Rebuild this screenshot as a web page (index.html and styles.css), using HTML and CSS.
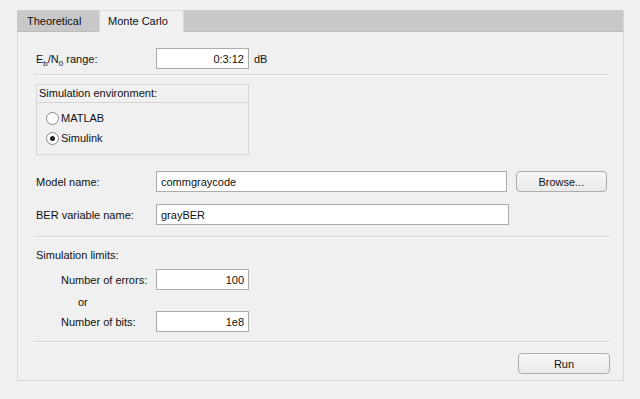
FILE: index.html
```html
<!DOCTYPE html>
<html lang="en">
<head>
    <meta charset="UTF-8">
    <title>BER Analysis - Monte Carlo</title>
    <link rel="stylesheet" href="styles.css">
</head>
<body>
    <div class="tabgroup">
        <!-- Tab strip -->
        <div class="tabs">
            <div class="tab">Theoretical</div>
            <div class="tab tab-active">Monte Carlo</div>
            <div class="tab-fill"></div>
        </div>

        <!-- Monte Carlo panel -->
        <div class="panel">
            <div class="row row-range">
                <span class="label">E<sub>b</sub>/N<sub>0</sub> range:</span>
                <input class="field field-short" type="text" value="0:3:12">
                <span class="unit">dB</span>
            </div>

            <hr class="sep sep-first">

            <fieldset class="groupbox">
                <div class="groupbox-title">Simulation environment:</div>
                <label class="radio"><span class="radio-dot"></span>MATLAB</label>
                <label class="radio"><span class="radio-dot checked"></span>Simulink</label>
            </fieldset>

            <div class="row row-model">
                <span class="label">Model name:</span>
                <input class="field field-long left" type="text" value="commgraycode">
                <button class="btn">Browse...</button>
            </div>

            <div class="row row-ber">
                <span class="label">BER variable name:</span>
                <input class="field field-long left" type="text" value="grayBER">
            </div>

            <hr class="sep sep-mid">

            <div class="limits-title">Simulation limits:</div>
            <div class="row row-errors">
                <span class="label label-indent">Number of errors:</span>
                <input class="field field-short" type="text" value="100">
            </div>
            <div class="or">or</div>
            <div class="row row-bits">
                <span class="label label-indent">Number of bits:</span>
                <input class="field field-short" type="text" value="1e8">
            </div>

            <hr class="sep sep-last">

            <div class="actions">
                <button class="btn">Run</button>
            </div>
        </div>
    </div>
</body>
</html>
```

FILE: styles.css
```css
body {
    background: #f0f0f0;
    margin: 0;
    padding: 10px 16px 0 17px;
    font-family: "Liberation Sans", Arial, sans-serif;
    font-size: 11px;
    color: #111;
}

.tabgroup {
    width: 607px;
}

.tabs {
    display: flex;
    height: 22px;
}

.tab {
    box-sizing: border-box;
    width: 82px;
    padding-left: 10px;
    line-height: 21px;
    background: #c8c8c8;
    border-top: 1px solid #d0d0d0;
    border-bottom: 1px solid #bcbcbc;
}

.tab-active {
    width: 85px;
    padding-left: 8px;
    background: #f0f0f0;
    border: 1px solid #dadada;
    border-bottom: none;
}

.tab-fill {
    flex: 1;
    background: #c8c8c8;
    border-top: 1px solid #d0d0d0;
    border-right: 1px solid #d8d8d8;
    border-bottom: 1px solid #bcbcbc;
}

.panel {
    box-sizing: border-box;
    height: 349px;
    padding: 16px 16px 0 16px;
    border: 1px solid #dadada;
    border-top: none;
    display: flex;
    flex-direction: column;
}

.row {
    display: flex;
    align-items: center;
    height: 21px;
}

.label {
    width: 120px;
    padding-left: 2px;
    flex-shrink: 0;
}

.label-indent {
    width: 95px;
    padding-left: 27px;
}

sub {
    font-size: 8px;
    vertical-align: -3px;
    line-height: 0;
}

.field {
    box-sizing: border-box;
    height: 21px;
    border: 1px solid #acacac;
    background: #fff;
    font-family: "Liberation Sans", Arial, sans-serif;
    font-size: 11px;
    color: #111;
    text-align: right;
    padding: 0 4px;
    margin: 0;
}

.field-short {
    width: 93px;
}

.field-long {
    width: 353px;
}

.left {
    text-align: left;
}

.unit {
    margin-left: 5px;
}

.sep {
    width: 575px;
    margin: 0;
    border: none;
    border-top: 1px solid #d4d4d4;
    border-bottom: 1px solid #fbfbfb;
}

.sep-first {
    margin-top: 5px;
}

.groupbox {
    box-sizing: border-box;
    width: 213px;
    height: 71px;
    margin: 8px 0 0 2px;
    padding: 0;
    border: 1px solid #d6d6d6;
}

.groupbox-title {
    height: 17px;
    line-height: 17px;
    padding-left: 2px;
    border-bottom: 1px solid #d6d6d6;
    margin-bottom: 5px;
}

.radio {
    display: flex;
    align-items: center;
    height: 20px;
    padding-left: 9px;
}

.radio-dot {
    box-sizing: border-box;
    width: 13px;
    height: 13px;
    margin-right: 2px;
    border: 1px solid #8a8a8a;
    border-radius: 50%;
    background: #fff;
    display: flex;
    align-items: center;
    justify-content: center;
}

.radio-dot.checked::after {
    content: "";
    width: 5px;
    height: 5px;
    border-radius: 50%;
    background: #222;
}

.row-model {
    margin-top: 16px;
}

.row-ber {
    margin-top: 12px;
}

.sep-mid {
    margin-top: 11px;
}

.limits-title {
    margin-top: 10px;
    padding-left: 2px;
    line-height: 14px;
}

.row-errors {
    margin-top: 7px;
}

.or {
    padding-left: 44px;
    line-height: 14px;
    margin-top: 5px;
}

.row-bits {
    margin-top: 2px;
}

.sep-last {
    margin-top: 9px;
}

.actions {
    width: 576px;
    display: flex;
    justify-content: flex-end;
    margin-top: 10px;
}

.btn {
    box-sizing: border-box;
    width: 92px;
    height: 21px;
    margin-left: 9px;
    border: 1px solid #adadad;
    border-radius: 4px;
    background: linear-gradient(#f7f7f7, #e9e9e9);
    font-family: "Liberation Sans", Arial, sans-serif;
    font-size: 11px;
    color: #111;
    padding: 0;
}
```
